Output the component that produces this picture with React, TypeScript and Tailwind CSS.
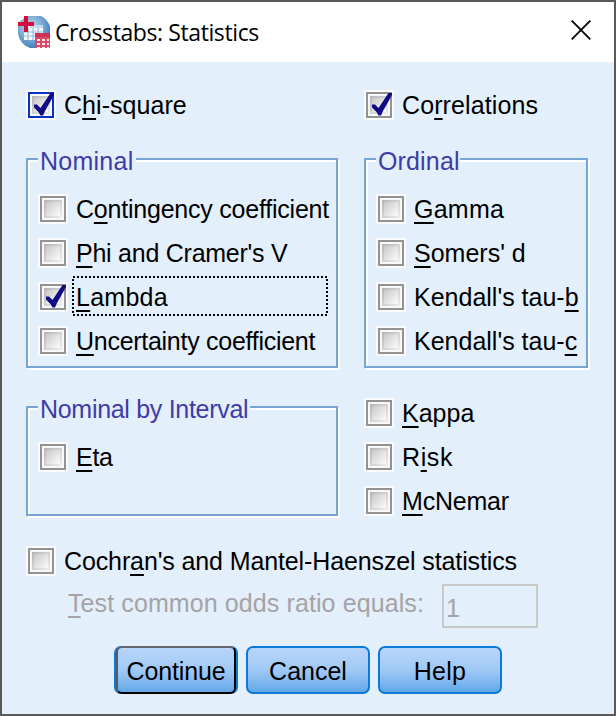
import React from "react";

type CheckProps = {
  before?: string;
  hot: string;
  after?: string;
  tracking?: string;
  checked?: boolean;
  active?: boolean;
  focused?: boolean;
};

function Box({ checked, active }: { checked?: boolean; active?: boolean }) {
  return (
    <svg width="30" height="30" viewBox="0 0 30 30" className="block shrink-0" shapeRendering="crispEdges">
      <defs>
        <linearGradient id="face" x1="0" y1="0" x2="1" y2="1">
          <stop offset="0" stopColor="#c8c8c8" />
          <stop offset="1" stopColor="#fcfcfc" />
        </linearGradient>
        <linearGradient id="rim" x1="0" y1="0" x2="1" y2="1">
          <stop offset="0" stopColor="#b4b4b4" />
          <stop offset="1" stopColor="#eeeeee" />
        </linearGradient>
      </defs>
      <rect width="30" height="30" fill="#f9fbfd" />
      <rect x="3" y="3" width="24" height="24" fill="#f8f8f8" stroke={active ? "#0a32c8" : "#939393"} strokeWidth="2" />
      <rect x="6" y="6" width="18" height="18" fill="url(#rim)" />
      <rect x="8" y="8" width="14" height="14" fill="url(#face)" />
      {checked && (
        <path
          d="M8 14.500H11L14.500 18L24.500 3H28V5L19 21L17 25.500H14.500L12.500 22L8 17.500Z"
          fill="#100a86"
          shapeRendering="auto"
        />
      )}
    </svg>
  );
}

function Hot({ children }: { children: React.ReactNode }) {
  return (
    <span className="underline decoration-2 underline-offset-[4px] [text-decoration-skip-ink:none]">{children}</span>
  );
}

function Check({ before, hot, after, tracking = "tracking-normal", checked, active, focused }: CheckProps) {
  return (
    <label className="relative flex h-[30px] items-center gap-2">
      <Box checked={checked} active={active} />
      <span className={`whitespace-pre leading-[30px] ${tracking}`}>
        {before}
        <Hot>{hot}</Hot>
        {after}
      </span>
      {focused && (
        <svg width="256" height="40" className="absolute -top-[6px] left-[34px]" shapeRendering="crispEdges">
          <rect x="1" y="1" width="254" height="38" fill="none" stroke="#000" strokeWidth="2" strokeDasharray="2 2" />
        </svg>
      )}
    </label>
  );
}

function Group({
  title,
  tracking,
  legendWidth,
  size,
  children,
}: {
  title: string;
  tracking: string;
  legendWidth: string;
  size: string;
  children: React.ReactNode;
}) {
  return (
    <section
      className={`relative border-2 border-[#76a5d5] pl-[10px] pt-[34px] shadow-[2px_2px_0_#fff,inset_2px_2px_0_#fff] ${size}`}
    >
      <h2
        className={`absolute -top-[13px] left-[10px] h-[28px] whitespace-pre bg-[#e3effb] pl-[2px] leading-[28px] text-[#403ba8] ${tracking} ${legendWidth}`}
      >
        {title}
      </h2>
      <div className="flex flex-col gap-[14px]">{children}</div>
    </section>
  );
}

function AppIcon() {
  return (
    <svg width="32" height="32" viewBox="0 0 32 32" className="block">
      <defs>
        <radialGradient id="globe" cx="0.4" cy="0.35" r="0.7">
          <stop offset="0" stopColor="#c3daed" />
          <stop offset="0.55" stopColor="#78a9d2" />
          <stop offset="1" stopColor="#377ab7" />
        </radialGradient>
      </defs>
      <path d="M9 0H23Q29 3 32 10V32H12Q2 28 0 18V7Z" fill="url(#globe)" />
      <path d="M6 9H25V24H6Z" fill="#f5f9fd" />
      <path d="M12 9H25V12H12Z" fill="#c3daee" />
      <path d="M6 16H25M6 20H25M10 12V24M15 12V24M20 12V24" stroke="#9dbfe0" strokeWidth="1.2" />
      <path d="M6 0H10V6H16V10H10V16H6V10H0V6H6Z" fill="#d20c3f" />
      <path d="M17 17H32V32H17Z" fill="#db4969" />
      <path d="M17 17H32V21H17Z" fill="#cf3155" />
      <path d="M19 23H22V25H19ZM24 23H27V25H24ZM29 23H31V25H29ZM19 27H22V29H19ZM24 27H27V29H24ZM29 27H31V29H29ZM19 31H22V32H19ZM24 31H27V32H24ZM29 31H31V32H29Z" fill="#ffe9ef" />
    </svg>
  );
}

function Button({ label, primary, tracking }: { label: string; primary?: boolean; tracking: string }) {
  return (
    <button
      className={`relative h-12 w-[124px] rounded-[7px] border-2 border-[#0b79d8] bg-linear-to-b from-[#b9d5fa] via-[#a0c9f6] to-[#62a8e8] pt-px leading-[44px] ${tracking}`}
    >
      {primary && (
        <span className="absolute -top-[2px] -bottom-[2px] left-0 right-0 rounded-[6px] border-2 border-black border-l-[#555b63] border-t-[#626770]" />
      )}
      {label}
    </button>
  );
}

export default function App() {
  return (
    <main className="flex h-[716px] w-[616px] flex-col overflow-hidden border-2 border-[#595959] bg-[#e3effb] font-['Liberation_Sans',Arial,sans-serif] text-[25px] text-black">
      <header className="flex h-[60px] shrink-0 items-center bg-white pl-4 pr-[23px]">
        <AppIcon />
        <h1 className="ml-[5px] grow whitespace-pre font-['Open_Sans','Noto_Sans',sans-serif] text-[23px] leading-[32px] tracking-[-0.4px]">
          Crosstabs: Statistics
        </h1>
        <svg width="20" height="20" viewBox="0 0 20 20" className="-mt-[4px] block">
          <path d="M.7 .7L19.300 19.300M19.300 .7L.7 19.300" stroke="#000" strokeWidth="1.8" />
        </svg>
      </header>

      <div className="flex gap-[26px] pl-6 pt-7">
        <div className="flex w-[312px] flex-col">
          <Check before="C" hot="h" after="i-square" tracking="tracking-[0.05px]" checked active />
          <div className="pt-[38px]">
            <Group title="Nominal" tracking="tracking-[0.25px]" legendWidth="w-[98px]" size="h-[210px]">
              <Check before="C" hot="o" after="ntingency coefficient" tracking="tracking-[-0.22px]" />
              <Check hot="P" after="hi and Cramer's V" tracking="tracking-[-0.25px]" />
              <Check hot="L" after="ambda" tracking="tracking-[0.25px]" checked focused />
              <Check hot="U" after="ncertainty coefficient" tracking="tracking-[-0.28px]" />
            </Group>
          </div>
          <div className="pt-[38px]">
            <Group title="Nominal by Interval" tracking="tracking-[-0.3px]" legendWidth="w-[212px]" size="h-[110px]">
              <Check hot="E" after="ta" tracking="tracking-[-0.3px]" />
            </Group>
          </div>
        </div>
        <div className="flex w-[224px] flex-col">
          <Check before="Co" hot="r" after="relations" tracking="tracking-[0.1px]" checked />
          <div className="pt-[38px]">
            <Group title="Ordinal" tracking="tracking-[0.15px]" legendWidth="w-[84px]" size="h-[210px]">
              <Check hot="G" after="amma" tracking="tracking-[0.25px]" />
              <Check hot="S" after="omers' d" />
              <Check before="Kendall's tau-" hot="b" />
              <Check before="Kendall's tau-" hot="c" />
            </Group>
          </div>
          <div className="flex flex-col gap-[14px] pt-[30px]">
            <Check hot="K" after="appa" />
            <Check before="R" hot="i" after="sk" tracking="tracking-[0.6px]" />
            <Check hot="M" after="cNemar" tracking="tracking-[-0.2px]" />
          </div>
        </div>
      </div>

      <div className="pl-6 pt-[30px]">
        <Check before="Cochr" hot="a" after="n's and Mantel-Haenszel statistics" tracking="tracking-[-0.12px]" />
      </div>
      <div className="flex pl-[66px] pt-2 text-[#a5a3a6]">
        <span className="w-[374px] whitespace-pre pt-[4px] leading-[30px] tracking-[0.1px]">
          <Hot>T</Hot>est common odds ratio equals:
        </span>
        <div className="h-[44px] w-[96px] border-2 border-[#c9c9c9] pl-[2px] leading-[44px]">1</div>
      </div>
      <div className="flex gap-2 pl-[112px] pt-[18px]">
        <Button label="Continue" primary tracking="tracking-[-0.15px]" />
        <Button label="Cancel" tracking="tracking-normal" />
        <Button label="Help" tracking="tracking-[0.3px]" />
      </div>
    </main>
  );
}
